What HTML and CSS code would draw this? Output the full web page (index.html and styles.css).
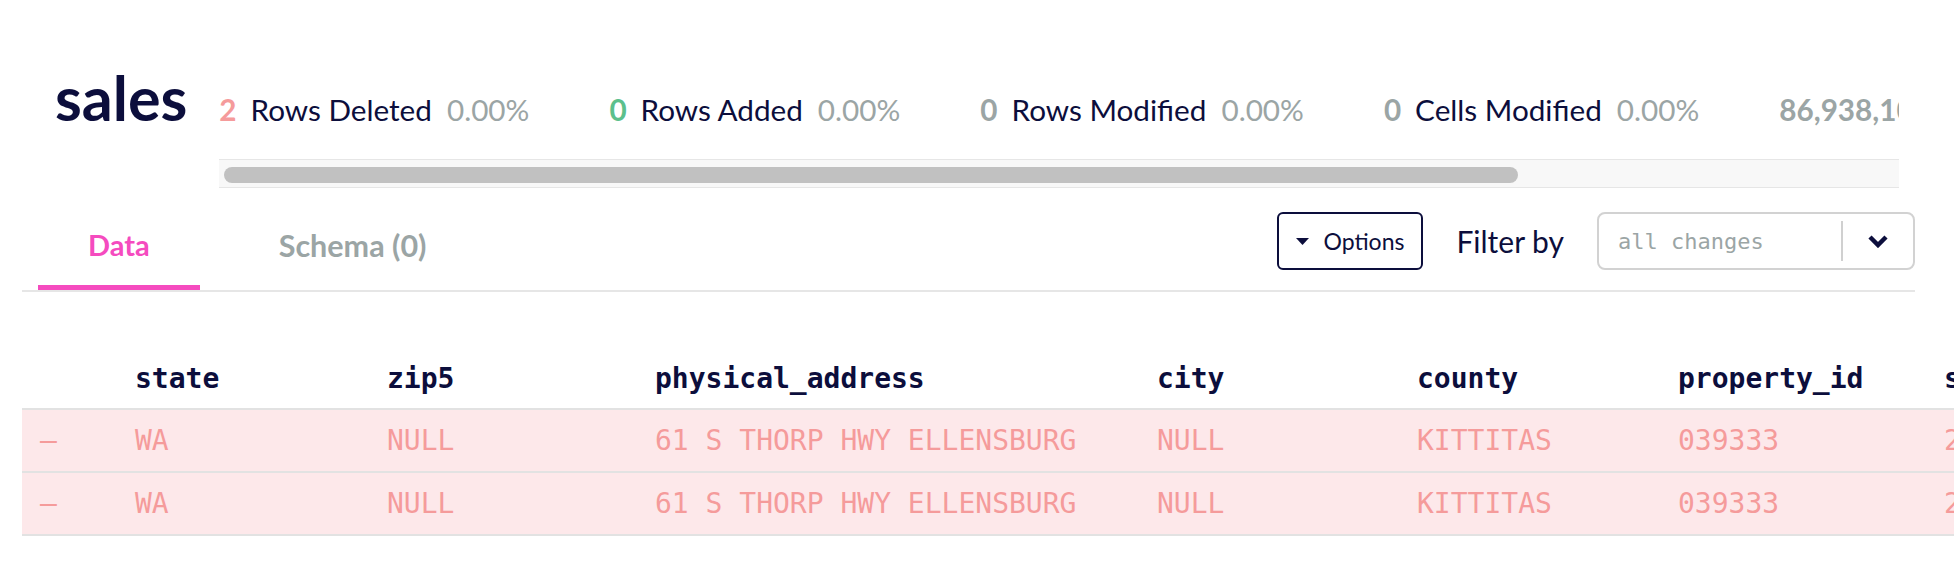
FILE: index.html
```html
<!DOCTYPE html>
<html lang="en">
<head>
    <meta charset="UTF-8">
    <meta name="viewport" content="width=device-width, initial-scale=1.0">
    <title>sales diff</title>
    <link rel="stylesheet" href="styles.css">
</head>
<body>
    <div class="header">
        <h1 class="table-name">sales</h1>
        <div class="summary-wrap">
            <div class="summary">
                <div class="stat">
                    <span class="stat-num num-deleted">2</span>
                    <span class="stat-label">Rows Deleted</span>
                    <span class="stat-pct">0.00%</span>
                </div>
                <div class="stat">
                    <span class="stat-num num-added">0</span>
                    <span class="stat-label">Rows Added</span>
                    <span class="stat-pct">0.00%</span>
                </div>
                <div class="stat">
                    <span class="stat-num num-plain">0</span>
                    <span class="stat-label">Rows Modified</span>
                    <span class="stat-pct">0.00%</span>
                </div>
                <div class="stat">
                    <span class="stat-num num-plain">0</span>
                    <span class="stat-label">Cells Modified</span>
                    <span class="stat-pct">0.00%</span>
                </div>
                <div class="stat">
                    <span class="stat-num num-plain">86,938,102</span>
                    <span class="stat-label">Rows Unmodified</span>
                    <span class="stat-pct">100.00%</span>
                </div>
            </div>
            <!-- horizontal scroll indicator for the summary strip -->
            <div class="scrollbar">
                <div class="scrollbar-thumb" style="width: 77.5%"></div>
            </div>
        </div>
    </div>

    <div class="toolbar">
        <div class="tabs">
            <div class="tab tab-active">Data</div>
            <div class="tab">Schema (0)</div>
        </div>
        <div class="controls">
            <button class="options-btn">
                <svg class="caret" width="13" height="7" viewBox="0 0 13 7">
                    <polygon points="0,0 13,0 6.5,7" fill="#0c0e3c"/>
                </svg>
                Options
            </button>
            <span class="filter-label">Filter by</span>
            <div class="filter-select">
                <span class="filter-value">all changes</span>
                <span class="filter-sep"></span>
                <span class="filter-arrow">
                    <svg width="22" height="14" viewBox="0 0 22 14">
                        <polyline points="3,3 11,11 19,3" fill="none" stroke="#0c0e3c" stroke-width="4.5"/>
                    </svg>
                </span>
            </div>
        </div>
    </div>

    <div class="grid-wrap">
        <table class="diff-table">
            <colgroup>
                <col class="col-mark">
                <col class="col-state">
                <col class="col-zip">
                <col class="col-address">
                <col class="col-city">
                <col class="col-county">
                <col class="col-property">
                <col class="col-date">
            </colgroup>
            <thead>
                <tr>
                    <th class="cell-mark"></th>
                    <th>state</th>
                    <th>zip5</th>
                    <th>physical_address</th>
                    <th>city</th>
                    <th>county</th>
                    <th>property_id</th>
                    <th>sale_date</th>
                </tr>
            </thead>
            <tbody>
                <tr class="row-deleted">
                    <td class="cell-mark">&ndash;</td>
                    <td>WA</td>
                    <td>NULL</td>
                    <td>61 S THORP HWY ELLENSBURG</td>
                    <td>NULL</td>
                    <td>KITTITAS</td>
                    <td>039333</td>
                    <td>2019-03-14</td>
                </tr>
                <tr class="row-deleted">
                    <td class="cell-mark">&ndash;</td>
                    <td>WA</td>
                    <td>NULL</td>
                    <td>61 S THORP HWY ELLENSBURG</td>
                    <td>NULL</td>
                    <td>KITTITAS</td>
                    <td>039333</td>
                    <td>2019-03-14</td>
                </tr>
            </tbody>
        </table>
    </div>
</body>
</html>
```

FILE: styles.css
```css
body {
    margin: 0;
    font-family: Lato, "Noto Sans", sans-serif;
    color: #0c0e3c;
    background-color: #fff;
}

/* Title + summary strip */
.header {
    display: flex;
    align-items: baseline;
    padding: 68px 55px 0 55px;
}

.table-name {
    margin: 0;
    font-size: 61px;
    line-height: 60px;
    font-weight: 700;
}

.summary-wrap {
    flex: 1;
    min-width: 0;
    margin-left: 32px;
}

.summary {
    display: flex;
    gap: 80px;
    overflow: hidden;
    white-space: nowrap;
    font-size: 29.7px;
    line-height: 36px;
    padding-bottom: 31px;
}

.stat {
    display: flex;
    align-items: baseline;
}

.stat-num {
    font-weight: 700;
    margin-right: 14px;
}

.stat-pct {
    margin-left: 15px;
    color: #9ba5a5;
}

.num-deleted {
    color: #f59b9b;
}

.num-added {
    color: #5cc08c;
}

.num-plain {
    color: #9ba5a5;
}

.scrollbar {
    height: 16px;
    padding: 7px 5px 4px 5px;
    background-color: #f8f8f8;
    border-top: 1px solid #e6e6e6;
    border-bottom: 1px solid #e6e6e6;
}

.scrollbar-thumb {
    height: 16px;
    border-radius: 8px;
    background-color: #c1c1c1;
}

/* Tabs + filter controls */
.toolbar {
    display: flex;
    align-items: flex-end;
    margin: 0 39px 0 22px;
    border-bottom: 2px solid #e6e6e6;
}

.tabs {
    display: flex;
    gap: 29px;
    padding-left: 16px;
}

.tab {
    padding: 39px 50px 22px;
    font-size: 29px;
    line-height: 36px;
    font-weight: 700;
    color: #9ba5a5;
    border-bottom: 5px solid transparent;
}

.tab-active {
    color: #f54bbf;
    border-bottom-color: #f54bbf;
}

.tab + .tab {
    font-size: 30.5px;
}

.controls {
    margin-left: auto;
    align-self: center;
    padding-top: 4px;
    display: flex;
    align-items: center;
    gap: 33px;
}

.options-btn {
    display: flex;
    align-items: center;
    gap: 15px;
    height: 58px;
    padding: 0 17px;
    border: 2px solid #0c0e3c;
    border-radius: 6px;
    background-color: #fff;
    color: #0c0e3c;
    font-family: Lato, "Noto Sans", sans-serif;
    font-size: 23px;
}

.filter-label {
    font-size: 30px;
}

.filter-select {
    display: flex;
    align-items: center;
    box-sizing: border-box;
    width: 318px;
    height: 58px;
    border: 2px solid #d2d2d2;
    border-radius: 8px;
}

.filter-value {
    flex: 1;
    padding-left: 19px;
    font-family: "DejaVu Sans Mono", monospace;
    font-size: 22px;
    color: #9ba5a5;
}

.filter-sep {
    width: 2px;
    height: 40px;
    background-color: #d0d0d0;
}

.filter-arrow {
    width: 70px;
    display: flex;
    justify-content: center;
}

/* Diff table */
.grid-wrap {
    margin: 57px 0 0 22px;
    overflow: hidden;
}

.diff-table {
    border-collapse: collapse;
    table-layout: fixed;
    width: 2222px;
    font-family: "DejaVu Sans Mono", monospace;
    font-size: 28px;
}

.col-mark { width: 113px; }
.col-state { width: 252px; }
.col-zip { width: 268px; }
.col-address { width: 502px; }
.col-city { width: 260px; }
.col-county { width: 261px; }
.col-property { width: 266px; }
.col-date { width: 300px; }

.diff-table th,
.diff-table td {
    height: 61px;
    padding: 0;
    text-align: left;
    white-space: nowrap;
    border-bottom: 2px solid #e2e2e2;
}

.diff-table th {
    height: 59px;
    font-weight: 700;
    color: #0c0e3c;
}

.diff-table td {
    color: #f59b9b;
}

.row-deleted {
    background-color: #fde8ea;
}

.diff-table .cell-mark {
    padding-left: 18px;
}
```
